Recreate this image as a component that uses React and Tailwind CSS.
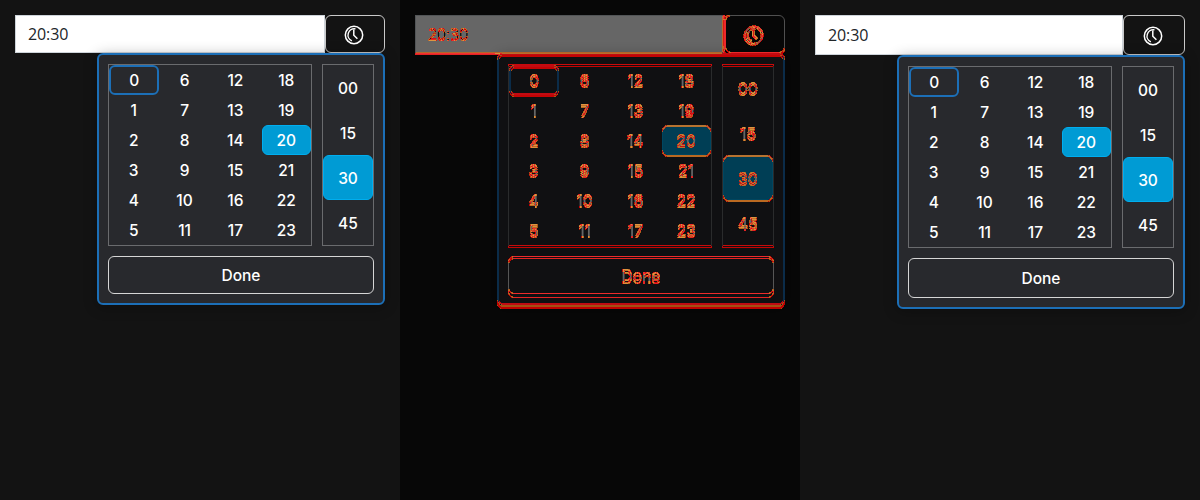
import React from "react";

const hours = Array.from({ length: 24 }, (_, i) => i);
const minutes = ["00", "15", "30", "45"];

function Clock() {
  return (
    <svg className="mr-[2px] mt-px h-5 w-5" viewBox="0 0 20 20" fill="none" stroke="white">
      <circle cx="10" cy="10" r="8.7" strokeWidth="1.5" />
      <path d="M11.5 3.9a6.3 6.3 0 0 0-3.6 12" strokeWidth="1.4" />
      <path d="M9.8 4.6v5.6l3.6 3.6" strokeWidth="1.5" />
    </svg>
  );
}

function Picker({ tall }) {
  return (
    <div className="h-[500px] w-[400px] overflow-hidden bg-[#131313] pl-[15px] pt-[15px]">
      <div className={`flex w-[370px] ${tall ? "h-10" : "h-[38px]"}`}>
        <div className="flex flex-1 items-center border border-[#ced4da] bg-white pl-3 font-['Open_Sans','Noto_Sans',sans-serif] text-[16px] tracking-[-0.1px] text-[#212529]">
          20:30
        </div>
        <div className={`flex items-center justify-center rounded-md border border-[#c9c9c9] ${tall ? "w-[62px]" : "w-[60px]"}`}>
          <Clock />
        </div>
      </div>
      <div className="relative ml-[82px] w-72 rounded-md border-2 border-[#1c6fb7] bg-[#28292d] p-[9px] font-['Inter',sans-serif] text-[15.5px] font-medium text-white shadow-[0_2px_14px_rgba(0,0,0,0.3)]">
        <div className="flex gap-[10px]">
          <div className="grid h-[182px] w-[204px] grid-flow-col grid-cols-4 grid-rows-6 gap-x-[1.4px] border border-[#6a6b6e]">
            {hours.map((h) => (
              <div
                key={h}
                className={`flex items-center justify-center rounded-md pt-0.5 ${h === 0 ? "-mr-px border-2 border-[#1c6fb7]" : h === 20 ? "border border-[#00aeef] bg-[#009bd4]" : ""}`}
              >
                {h}
              </div>
            ))}
          </div>
          <div className="grid h-[182px] w-[52px] grid-rows-4 border border-[#6a6b6e]">
            {minutes.map((m) => (
              <div
                key={m}
                className={`flex items-center justify-center rounded-md pt-[3px] ${m === "30" ? "border border-[#00aeef] bg-[#009bd4]" : ""}`}
              >
                {m}
              </div>
            ))}
          </div>
        </div>
        <div className={`mt-[10px] flex items-center justify-center rounded-md border border-[#d6d6d6] pt-0.5 ${tall ? "h-10" : "h-[38px]"}`}>
          Done
        </div>
      </div>
    </div>
  );
}

function Difference() {
  return (
    <div className="relative h-[500px] w-[400px] overflow-hidden bg-black">
      <div className="opacity-40">
        <Picker />
      </div>
      <div className="absolute inset-0 isolate [filter:url(#changes)]" aria-hidden="true">
        <Picker />
        <div className="absolute inset-0 mix-blend-difference">
          <Picker tall />
        </div>
      </div>
      <svg className="absolute h-0 w-0">
        <filter id="changes" x="0" y="0" width="1" height="1" colorInterpolationFilters="sRGB">
          <feColorMatrix values="0.33 0.33 0.34 0 0  0.33 0.33 0.34 0 0  0.33 0.33 0.34 0 0  0.33 0.33 0.34 0 0" />
          <feComponentTransfer>
            <feFuncR type="discrete" tableValues="0.85 0.85 0.85 0.85 1 1 1 1 0.9 0.9 0.9 0.9 1 1 1 1 0.9 0.9 1 1" />
            <feFuncG type="discrete" tableValues="0.42 0.42 0.42 0.42 0 0 0 0 0.5 0.5 0.5 0.5 0.15 0.15 0.15 0.15 0.6 0.6 0.2 0.2" />
            <feFuncB type="discrete" tableValues="0.1 0.1 0.1 0.1 0 0 0 0 0.15 0.15 0.15 0.15 0.15 0.15 0.15 0.15 0.25 0.25 0.2 0.2" />
            <feFuncA type="discrete" tableValues="0 0 0.75 0.75 0.75 0.75 0.75 0.75 0.8 0.8 0.8 0.8 0.9 0.9 0.9 0.9 0.95 0.95 0.95 0.95" />
          </feComponentTransfer>
        </filter>
      </svg>
    </div>
  );
}

export default function App() {
  return (
    <div className="flex h-[500px] w-[1200px] overflow-hidden bg-[#131313]">
      <Picker />
      <Difference />
      <Picker tall />
    </div>
  );
}
